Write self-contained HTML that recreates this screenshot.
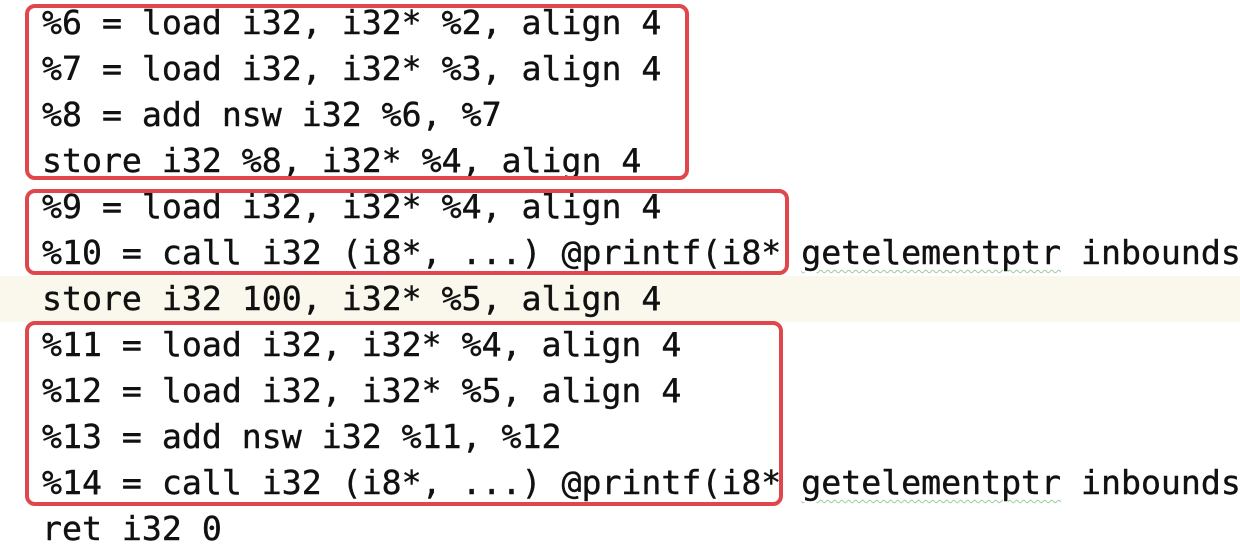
<!DOCTYPE html>
<html><head><style>
html,body{margin:0;padding:0;background:#fff;width:1240px;height:560px;overflow:hidden;position:relative}
.code{position:absolute;left:42px;top:0px;font-family:"DejaVu Sans Mono","Liberation Mono",monospace;font-size:33.2px;line-height:46px;color:#111;white-space:pre;z-index:2;-webkit-text-stroke:0.4px #111}
.hl{position:absolute;left:0;top:276px;width:1240px;height:46px;background:#faf8ec}
.box{position:absolute;border:4.5px solid #e0474c;border-radius:10px;z-index:3;box-sizing:border-box}
.sq{text-decoration:underline wavy #9c9;text-decoration-thickness:1px;text-underline-offset:5px}
</style></head><body>
<div class="hl"></div>
<div class="code">%6 = load i32, i32* %2, align 4
%7 = load i32, i32* %3, align 4
%8 = add nsw i32 %6, %7
store i32 %8, i32* %4, align 4
%9 = load i32, i32* %4, align 4
%10 = call i32 (i8*, ...) @printf(i8* <span class="sq">getelementptr</span> inbounds
store i32 100, i32* %5, align 4
%11 = load i32, i32* %4, align 4
%12 = load i32, i32* %5, align 4
%13 = add nsw i32 %11, %12
%14 = call i32 (i8*, ...) @printf(i8* <span class="sq">getelementptr</span> inbounds
ret i32 0</div>
<div class="box" style="left:25px;top:4px;width:664px;height:176px"></div>
<div class="box" style="left:25px;top:189px;width:764px;height:86px"></div>
<div class="box" style="left:25px;top:321px;width:758px;height:185px"></div>
</body></html>
